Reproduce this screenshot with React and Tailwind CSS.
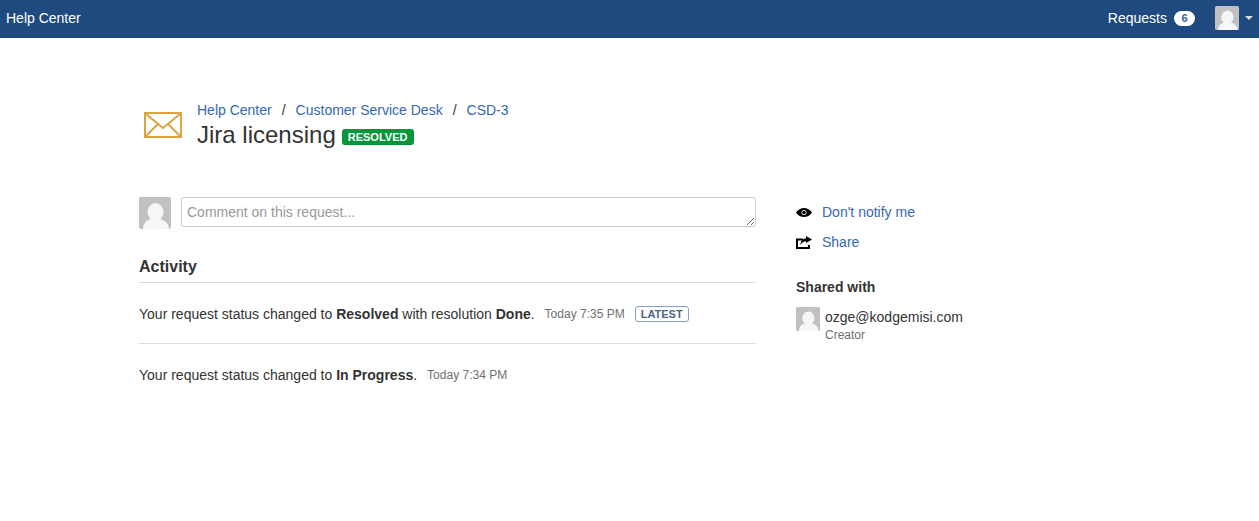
import React from 'react';

const Avatar = ({ className }) => (
  <svg viewBox="0 0 32 32" className={className}>
    <rect width="32" height="32" rx="2" fill="#c1c1c1" />
    <ellipse cx="16.500" cy="15" rx="8" ry="9" fill="#f6f6f6" />
    <path d="M4 32c0-6 4-9 8-10h9c4 1 9 4 9 10z" fill="#f6f6f6" />
  </svg>
);

const Envelope = () => (
  <svg viewBox="0 0 38 26" className="w-[38px] h-[26px]" fill="none" stroke="#dca440">
    <rect x="1" y="1" width="36" height="24" strokeWidth="2" />
    <path d="M2 2l17 14L36 2M2 24l12-12M36 24L24 12" strokeWidth="2" />
  </svg>
);

const EyeIcon = () => (
  <svg viewBox="0 0 16 9" className="w-[16px] h-[9px]">
    <path d="M0 4.500C2 1.500 5 0 8 0s6 1.500 8 4.500C14 7.500 11 9 8 9S2 7.500 0 4.500z" fill="#000" />
    <circle cx="8" cy="4.500" r="2.500" fill="#fff" />
    <circle cx="8" cy="4.500" r="1.800" fill="#000" />
  </svg>
);

const ShareIcon = () => (
  <svg viewBox="0 0 16 13" className="w-[16px] h-[13px]">
    <path d="M7 3.500H1v8.500h12V9" stroke="#000" strokeWidth="2" fill="none" />
    <path d="M10 0l6 3.500L10 7V5.300C7.500 5.300 6 6.500 4.500 9 4.500 5.500 6.500 2.500 10 2.200z" fill="#000" />
  </svg>
);

export default function App() {
  return (
    <div className="min-h-[521px] bg-white text-[14px] leading-[20px] text-[#333] font-['Liberation_Sans',Arial,sans-serif]">
      <header className="h-[38px] bg-[#1f4a80] flex items-center justify-between pb-[2px] pl-[6px] pr-[6px] text-white">
        <span>Help Center</span>
        <div className="flex items-center">
          <span>Requests</span>
          <span className="ml-[7px] w-[21px] h-[15px] rounded-full bg-white text-[#3262ae] text-[11px] leading-[15px] font-bold text-center">6</span>
          <Avatar className="ml-[20px] w-[24px] h-[24px]" />
          <span className="ml-[6px] border-x-[4px] border-x-transparent border-t-[4px] border-t-[#ddd]"></span>
        </div>
      </header>

      <main className="pl-[139px]">
        <div className="flex pt-[62px] h-[159px]">
          <div className="pl-[5px] pt-[12px] w-[58px]">
            <Envelope />
          </div>
          <div>
            <nav className="text-[#3568b2] flex h-[20px]">
              <a>Help Center</a>
              <span className="text-[#333] mx-[10px]">/</span>
              <a>Customer Service Desk</a>
              <span className="text-[#333] mx-[10px]">/</span>
              <a>CSD-3</a>
            </nav>
            <div className="flex items-center">
              <h1 className="text-[24px] leading-[30px] font-normal">Jira licensing</h1>
              <span className="ml-[6px] mt-[4px] h-[16px] pl-[6px] pr-[7px] rounded-[3px] bg-[#04973a] text-white text-[11px] leading-[16px] font-bold">RESOLVED</span>
            </div>
          </div>
        </div>

        <div className="flex">
          <section className="w-[617px]">
            <div className="flex">
              <Avatar className="w-[32px] h-[32px] shrink-0" />
              <textarea
                rows="1"
                placeholder="Comment on this request..."
                className="ml-[10px] w-[575px] h-[30px] min-h-[30px] px-[5px] py-[4px] border border-[#ccc] rounded-[3px] text-[14px] leading-[20px] placeholder:text-[#999] outline-none"
              />
            </div>

            <h2 className="mt-[28px] pb-[5px] text-[16px] leading-[20px] font-bold border-b border-[#ddd]">Activity</h2>

            <div className="h-[61px] pt-[2px] flex items-center border-b border-[#ddd]">
              <span>Your request status changed to <b>Resolved</b> with resolution <b>Done</b>.</span>
              <span className="ml-[10px] text-[12px] text-[#707070]">Today 7:35 PM</span>
              <span className="ml-[10px] h-[16px] px-[5px] border border-[#84a0c4] rounded-[3px] text-[#4a6785] text-[11px] leading-[14px] font-bold">LATEST</span>
            </div>
            <div className="h-[61px] flex items-center">
              <span>Your request status changed to <b>In Progress</b>.</span>
              <span className="ml-[10px] text-[12px] text-[#707070]">Today 7:34 PM</span>
            </div>
          </section>

          <aside className="ml-[40px] pt-[5px]">
            <div className="h-[20px] flex items-center text-[#3568b2]">
              <span className="w-[26px]"><EyeIcon /></span>
              <a>Don't notify me</a>
            </div>
            <div className="h-[20px] mt-[10px] flex items-center text-[#3568b2]">
              <span className="w-[26px]"><ShareIcon /></span>
              <a>Share</a>
            </div>
            <h3 className="mt-[25px] font-bold">Shared with</h3>
            <div className="flex mt-[10px]">
              <Avatar className="w-[24px] h-[24px] shrink-0" />
              <div className="ml-[5px]">
                <div>ozge@kodgemisi.com</div>
                <div className="text-[12px] leading-[16px] text-[#707070]">Creator</div>
              </div>
            </div>
          </aside>
        </div>
      </main>
    </div>
  );
}
